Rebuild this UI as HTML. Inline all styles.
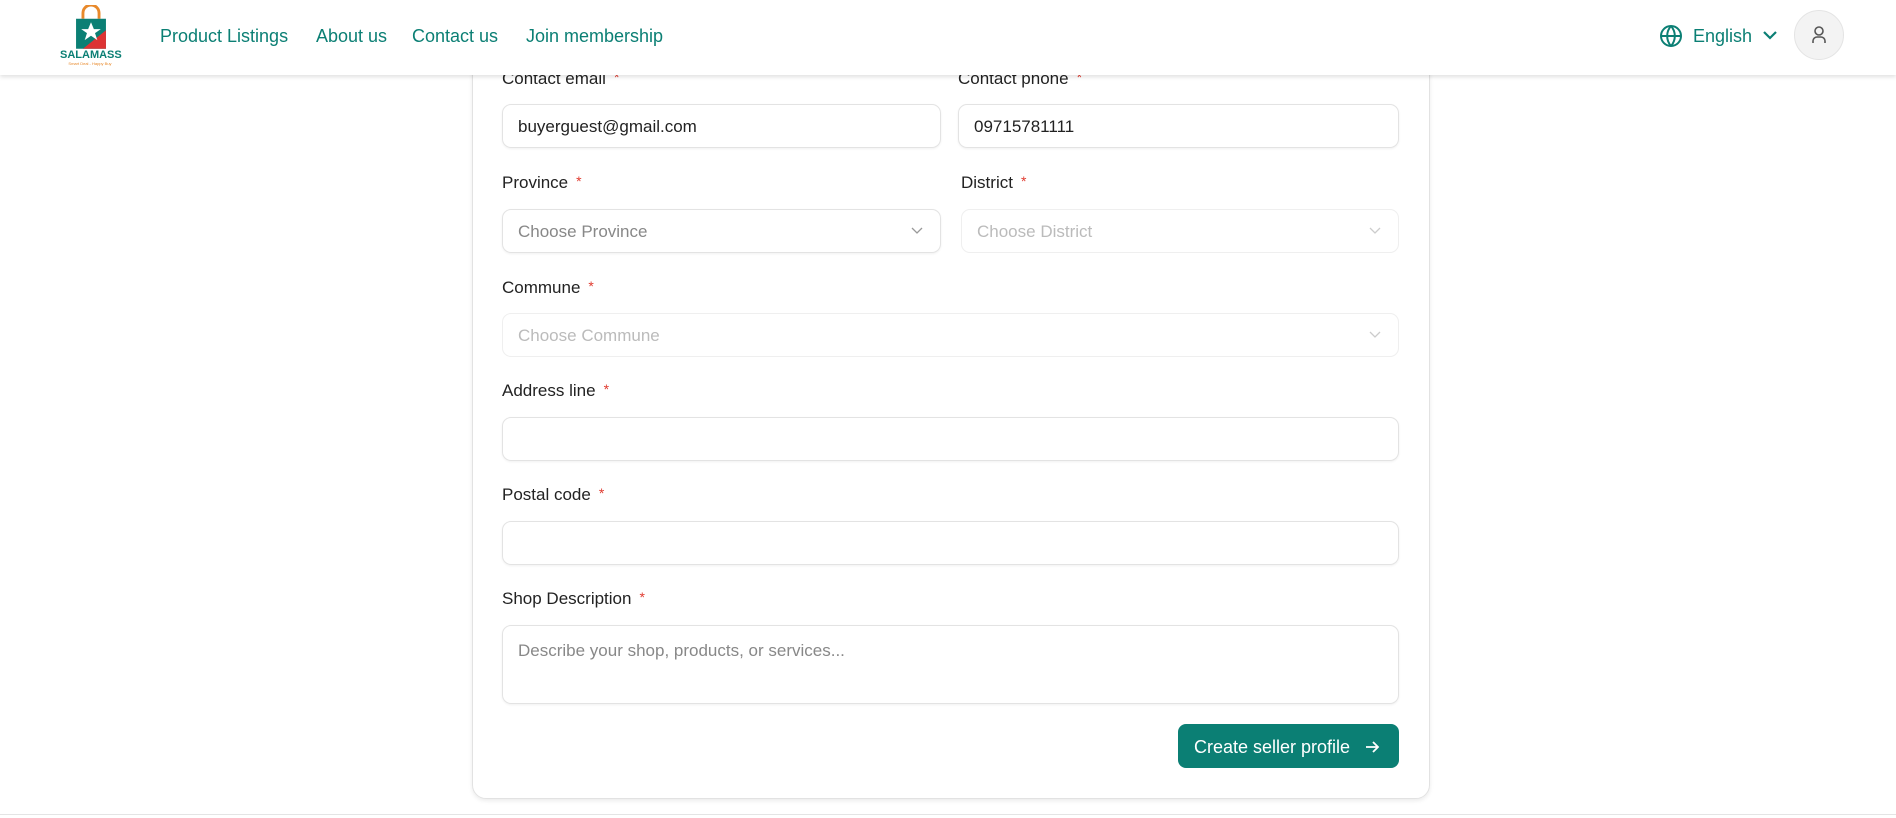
<!DOCTYPE html>
<html><head><meta charset="utf-8"><style>
*{box-sizing:border-box;margin:0;padding:0}
body{width:1896px;height:818px;overflow:hidden;background:#fff;font-family:"Liberation Sans",sans-serif;position:relative;color:#1f1f1f}
.hdr{position:absolute;left:0;top:0;width:1896px;height:75px;background:#fff;box-shadow:0 2px 4px rgba(0,0,0,.12);z-index:5}
.nav{position:absolute;top:26px;font-size:18px;color:#0b7f74}
.card{position:absolute;left:472px;top:40px;width:958px;height:759px;border:1px solid #e2e2e2;border-radius:14px;box-shadow:0 2px 4px rgba(0,0,0,.08)}
.lbl{position:absolute;font-size:17px;color:#222}
.lbl span{color:#e03a2f;margin-left:8px;font-size:14px;vertical-align:top}
.in{position:absolute;border:1px solid #e3e3e3;border-radius:9px;box-shadow:0 1px 2px rgba(0,0,0,.06);font-size:17px;padding-left:15px;padding-top:2px;display:flex;align-items:center;color:#222}
.ph{color:#888}.dis{color:#bbb;border-color:#efefef;box-shadow:none}
.chev{position:absolute;right:16px;top:50%;margin-top:-6px}
.btn{position:absolute;left:1178px;top:724px;width:221px;height:44px;background:#0b7f74;border-radius:8px;color:#fff;font-size:18px;display:flex;align-items:center;padding-left:16px;padding-top:2px}
</style></head><body>
<div class="hdr">
<svg style="position:absolute;left:71px;top:5px" width="40" height="46" viewBox="0 0 34 40"><path d="M10 12 V7 a7 7 0 0 1 14 0 V12" fill="none" stroke="#e8892b" stroke-width="2.5"/><path d="M4 12 H30 V38 H4Z" fill="#0b7f74"/><path d="M30 22 V38 H10Z" fill="#d33"/><path d="M17 15 l2.5 6 h6 l-5 3.5 2 6 -5.5-3.8 -5.5 3.8 2-6 -5-3.5 h6z" fill="#fff"/></svg>
<div style="position:absolute;left:60px;top:49px;font-size:11px;font-weight:bold;color:#0b7f74;width:60px;text-align:center">SALAMASS</div>
<div style="position:absolute;left:60px;top:61px;font-size:4px;color:#e8892b;width:60px;text-align:center">Smart Deal - Happy Buy</div>
<div class="nav" style="left:160px">Product Listings</div>
<div class="nav" style="left:316px">About us</div>
<div class="nav" style="left:412px">Contact us</div>
<div class="nav" style="left:526px">Join membership</div>
<svg style="position:absolute;left:1659px;top:24px" width="24" height="24" viewBox="0 0 24 24" fill="none" stroke="#0b7f74" stroke-width="2"><circle cx="12" cy="12" r="10"/><path d="M2 12h20M12 2a15 15 0 0 1 0 20M12 2a15 15 0 0 0 0 20"/></svg>
<div class="nav" style="left:1693px">English</div>
<svg style="position:absolute;left:1762px;top:29px" width="16" height="12" viewBox="0 0 16 12" fill="none" stroke="#0b7f74" stroke-width="2.2"><path d="M2 3l6 6 6-6"/></svg>
<div style="position:absolute;left:1794px;top:10px;width:50px;height:50px;border-radius:50%;background:#f3f3f3;border:1px solid #e4e4e4"></div>
<svg style="position:absolute;left:1810px;top:25px" width="18" height="20" viewBox="0 0 18 20" fill="none" stroke="#555" stroke-width="1.6"><circle cx="9" cy="6" r="4"/><path d="M3 18v-2a4 4 0 0 1 4-4h4a4 4 0 0 1 4 4v2"/></svg>
</div>
<div class="card"></div>
<div class="lbl" style="left:502px;top:69px">Contact email<span>*</span></div>
<div class="lbl" style="left:958px;top:69px">Contact phone<span>*</span></div>
<div class="in" style="left:502px;top:104px;width:439px;height:44px">buyerguest@gmail.com</div>
<div class="in" style="left:958px;top:104px;width:441px;height:44px">09715781111</div>
<div class="lbl" style="left:502px;top:173px">Province<span>*</span></div>
<div class="lbl" style="left:961px;top:173px">District<span>*</span></div>
<div class="in ph" style="left:502px;top:209px;width:439px;height:44px">Choose Province<svg class="chev" width="14" height="12" viewBox="0 0 14 12" fill="none" stroke="#999" stroke-width="1.3"><path d="M2 3l5 5 5-5"/></svg></div>
<div class="in dis" style="left:961px;top:209px;width:438px;height:44px">Choose District<svg class="chev" width="14" height="12" viewBox="0 0 14 12" fill="none" stroke="#ccc" stroke-width="1.3"><path d="M2 3l5 5 5-5"/></svg></div>
<div class="lbl" style="left:502px;top:278px">Commune<span>*</span></div>
<div class="in dis" style="left:502px;top:313px;width:897px;height:44px">Choose Commune<svg class="chev" width="14" height="12" viewBox="0 0 14 12" fill="none" stroke="#ccc" stroke-width="1.3"><path d="M2 3l5 5 5-5"/></svg></div>
<div class="lbl" style="left:502px;top:381px">Address line<span>*</span></div>
<div class="in" style="left:502px;top:417px;width:897px;height:44px"></div>
<div class="lbl" style="left:502px;top:485px">Postal code<span>*</span></div>
<div class="in" style="left:502px;top:521px;width:897px;height:44px"></div>
<div class="lbl" style="left:502px;top:589px">Shop Description<span>*</span></div>
<div class="in ph" style="left:502px;top:625px;width:897px;height:79px;align-items:flex-start;padding-top:15px">Describe your shop, products, or services...</div>
<div class="btn">Create seller profile<svg style="margin-left:14px" width="16" height="16" viewBox="0 0 16 16" fill="none" stroke="#fff" stroke-width="1.8"><path d="M2 8h12M9 3l5 5-5 5"/></svg></div>
<div style="position:absolute;left:0;top:814px;width:1896px;height:1px;background:#e4e4e4"></div>
</body></html>
